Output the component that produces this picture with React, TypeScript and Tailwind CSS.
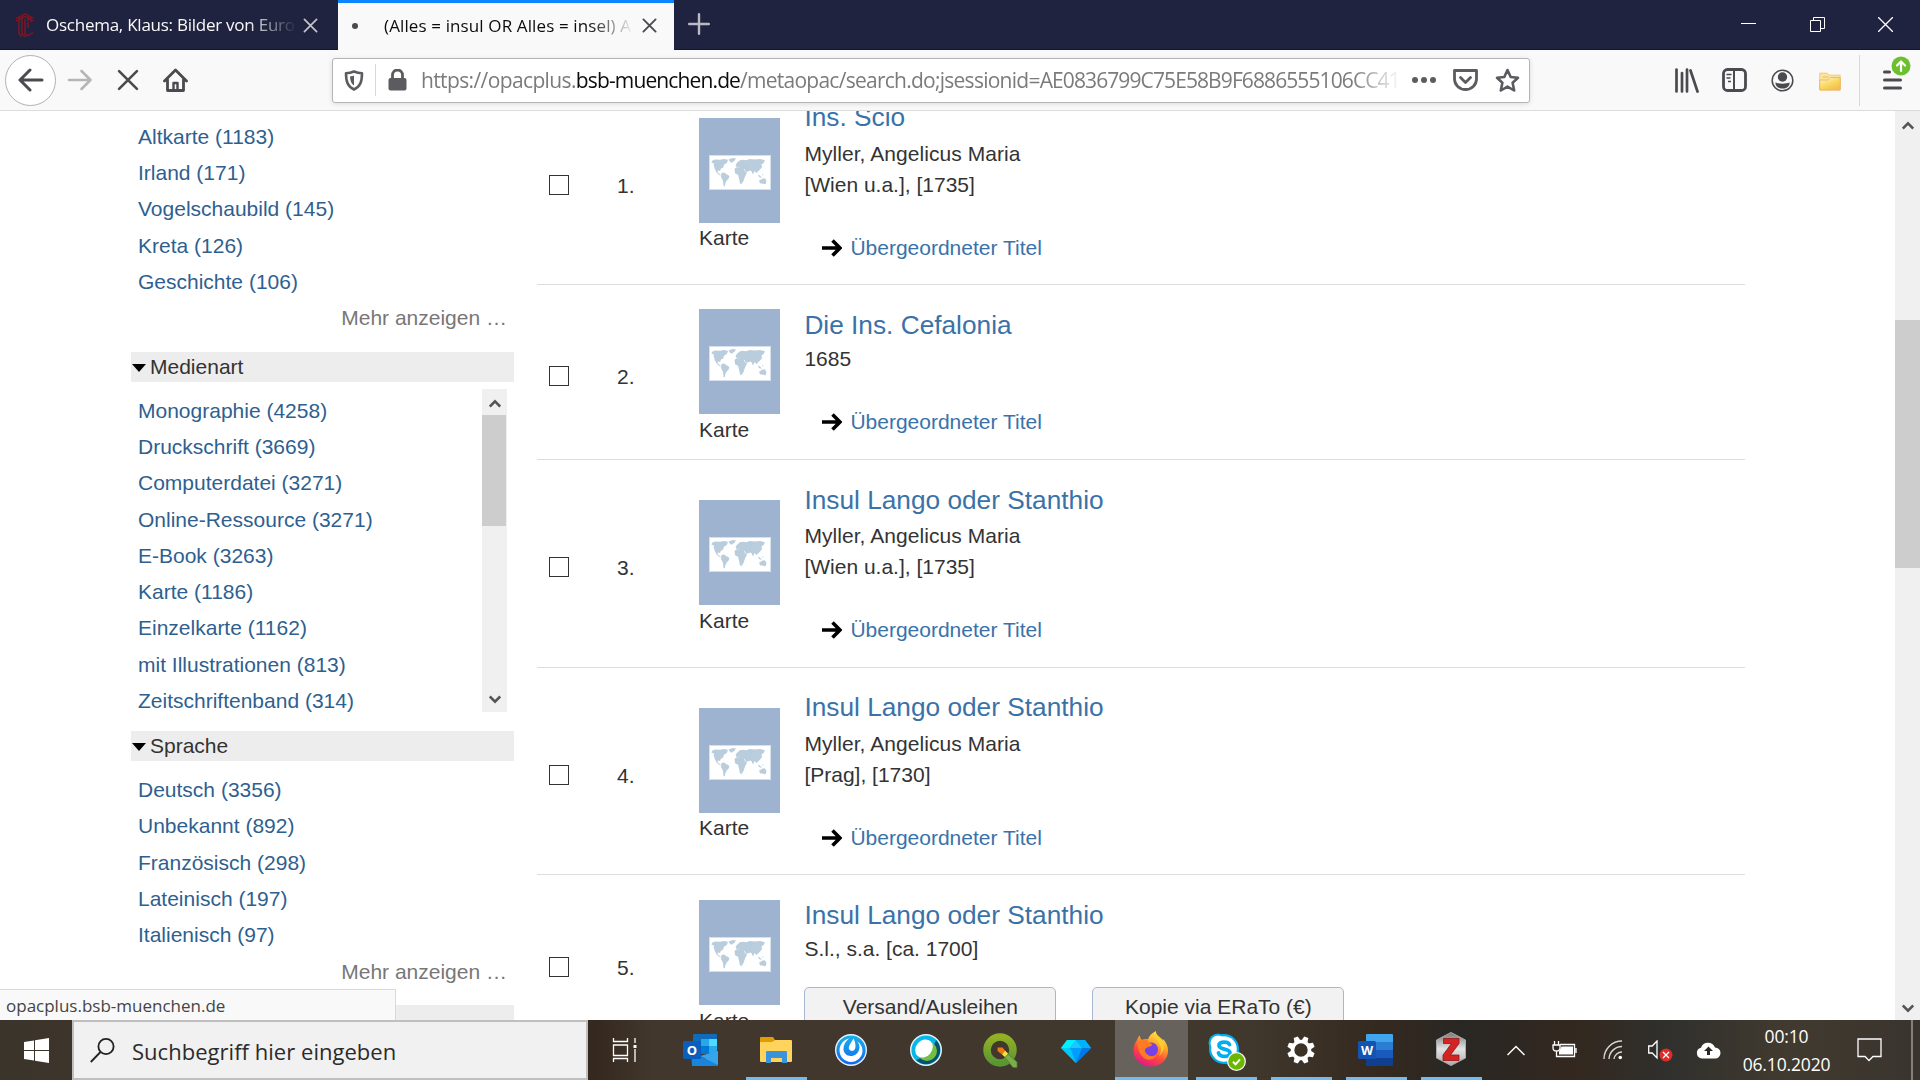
import React from "react";

const UI = "font-['Open_Sans','Noto_Sans',sans-serif]";

type Facet = { label: string; count: number };

const subjects: Facet[] = [
  { label: "Altkarte", count: 1183 },
  { label: "Irland", count: 171 },
  { label: "Vogelschaubild", count: 145 },
  { label: "Kreta", count: 126 },
  { label: "Geschichte", count: 106 },
];

const media: Facet[] = [
  { label: "Monographie", count: 4258 },
  { label: "Druckschrift", count: 3669 },
  { label: "Computerdatei", count: 3271 },
  { label: "Online-Ressource", count: 3271 },
  { label: "E-Book", count: 3263 },
  { label: "Karte", count: 1186 },
  { label: "Einzelkarte", count: 1162 },
  { label: "mit Illustrationen", count: 813 },
  { label: "Zeitschriftenband", count: 314 },
];

const languages: Facet[] = [
  { label: "Deutsch", count: 3356 },
  { label: "Unbekannt", count: 892 },
  { label: "Französisch", count: 298 },
  { label: "Lateinisch", count: 197 },
  { label: "Italienisch", count: 97 },
];

type Result = {
  title: string;
  author?: string;
  imprint: string;
  height: string;
  cover: string;
  caption: string;
  check: string;
  body: string;
  gap: string;
  order?: boolean;
};

const results: Result[] = [
  { title: "Ins. Scio", author: "Myller, Angelicus Maria", imprint: "[Wien u.a.], [1735]", height: "h-[208px]", cover: "pt-[41px]", caption: "leading-[30px]", check: "pt-[98px]", body: "pt-[24px]", gap: "mt-[5px]" },
  { title: "Die Ins. Cefalonia", imprint: "1685", height: "h-[175px]", cover: "pt-[24px]", caption: "leading-[32px]", check: "pt-[81px]", body: "pt-[24px]", gap: "mt-[2px]" },
  { title: "Insul Lango oder Stanthio", author: "Myller, Angelicus Maria", imprint: "[Wien u.a.], [1735]", height: "h-[208px]", cover: "pt-[40px]", caption: "leading-[32px]", check: "pt-[97px]", body: "pt-[24px]", gap: "mt-[4px]" },
  { title: "Insul Lango oder Stanthio", author: "Myller, Angelicus Maria", imprint: "[Prag], [1730]", height: "h-[207px]", cover: "pt-[40px]", caption: "leading-[30px]", check: "pt-[97px]", body: "pt-[23px]", gap: "mt-[5px]" },
  { title: "Insul Lango oder Stanthio", imprint: "S.l., s.a. [ca. 1700]", height: "h-[240px]", cover: "pt-[25px]", caption: "leading-[32px]", check: "pt-[82px]", body: "pt-[24px]", gap: "mt-[2px]", order: true },
];

function Cross({ size, color, width }: { size: number; color: string; width: number }) {
  return (
    <svg width={size} height={size} viewBox="0 0 16 16" className="shrink-0" fill="none" stroke={color} strokeWidth={width} strokeLinecap="round">
      <path d="M1.5 1.5l13 13M14.5 1.5l-13 13" />
    </svg>
  );
}

function TabBar() {
  return (
    <div className="flex h-[50px] shrink-0 border-b border-[#15162c] bg-[#202340]">
      <div className="flex h-[49px] w-[338px] items-center pt-px pl-[15px]">
        <svg width="20" height="25" viewBox="0 0 20 25" fill="none" stroke="#8a1420" strokeWidth="1.3">
          <path d="M1 5.500l9-4.500 9 4.500M1 8l9-4.500L19 8M4 9V4M7 8V3M13 8V3M16 9V4M4 9v12l3 2.500M7 8v13l4 3M10 6v15l3 1.500 5-3M13 9v6" />
        </svg>
        <span className={`${UI} ml-[11px] w-[251px] overflow-hidden whitespace-nowrap text-[17px] tracking-[-0.25px] text-[#f9f9fa] [mask-image:linear-gradient(to_right,black_80%,transparent)]`}>
          Oschema, Klaus: Bilder von Euro
        </span>
        <span className="ml-[6px] flex"><Cross size={15} color="#c4c5cd" width={1.8} /></span>
      </div>
      <div className="z-10 flex h-[50px] w-[336px] items-center border-t-[3px] border-[#0a84ff] bg-[#f9f9fa] pb-[2px] pl-[14px]">
        <span className="h-[6px] w-[6px] rounded-full bg-[#4a4a4f]" />
        <span className={`${UI} ml-[26px] w-[250px] overflow-hidden whitespace-nowrap text-[17px] tracking-[0.12px] text-[#0c0c0d] [mask-image:linear-gradient(to_right,black_82%,transparent)]`}>
          (Alles = insul OR Alles = insel) A
        </span>
        <span className="ml-[8px] flex"><Cross size={15} color="#4a4a4f" width={2} /></span>
      </div>
      <svg width="22" height="22" viewBox="0 0 22 22" className="ml-[14px] mt-[13px]" stroke="#b9bac4" strokeWidth="2.4" strokeLinecap="round">
        <path d="M11 1.2v19.6M1.2 11h19.6" />
      </svg>
      <div className="mt-[17px] ml-auto flex h-[15px] gap-[53px] pr-[27px]">
        <svg width="15" height="15" className="-translate-x-px" stroke="#fff"><path d="M0 6.500h15" /></svg>
        <svg width="15" height="15" stroke="#fff" fill="none"><path d="M.5 3.5h10v11h-10zM3.5 3.5v-3h11v11h-4" /></svg>
        <svg width="15" height="15" stroke="#fff" strokeWidth="1.3"><path d="M0 0l15 15M15 0L0 15" /></svg>
      </div>
    </div>
  );
}

function NavBar() {
  return (
    <div className="flex h-[61px] shrink-0 items-center border-b border-[#dcdcdd] bg-[#f9f9fa]">
      <div className="ml-[5px] flex h-[51px] w-[51px] items-center justify-center rounded-full border border-[#b1b1b3] bg-white">
        <svg width="26" height="24" viewBox="0 0 26 24" fill="none" stroke="#4a4a4f" strokeWidth="3" strokeLinecap="round" strokeLinejoin="round">
          <path d="M24 12H2.5M12 2L2 12l10 10" />
        </svg>
      </div>
      <svg width="26" height="24" viewBox="0 0 26 24" className="ml-[11px]" fill="none" stroke="#b6b6b8" strokeWidth="2.6" strokeLinecap="round" strokeLinejoin="round">
        <path d="M2 12h21.500M14.500 3l9 9-9 9" />
      </svg>
      <span className="ml-[24px] flex"><Cross size={22} color="#4a4a4f" width={1.9} /></span>
      <svg width="25" height="25" viewBox="0 0 25 25" className="ml-[24px]" fill="none" stroke="#4a4a4f" strokeWidth="2.800" strokeLinejoin="round" strokeLinecap="round">
        <path d="M1.500 13L12.500 2l11 11M4.500 11.500v11h16v-11" />
        <path d="M10.500 22v-7h4v7" strokeWidth="2.400" />
      </svg>
      <div className="ml-[144px] flex h-[45px] w-[1198px] shrink-0 items-center rounded-[3px] border border-[#b5b5b7] bg-white shadow-[0_1px_5px_rgba(0,0,0,0.12)]">
        <svg width="20" height="21" viewBox="0 0 20 21" className="ml-[11px]" fill="none" stroke="#5c5c60" strokeWidth="2.600" strokeLinejoin="round">
          <path d="M10 1.500c3 1.300 5 1.700 8 1.800 0 8-1.500 13-8 16.200C3.500 16.300 2 11.300 2 3.300c3-.1 5-.5 8-1.800z" />
          <path d="M10 5.500c-1.500.6-2.500.8-4 1 .2 4.500 1.200 7 4 9z" fill="#5c5c60" stroke="none" />
        </svg>
        <span className="ml-[11px] h-[32px] w-px bg-[#d7d7db]" />
        <svg width="19" height="22" viewBox="0 0 19 22" className="ml-[12px]" fill="none">
          <rect x="0.500" y="9" width="18" height="12.500" rx="2" fill="#5c5c60" />
          <path d="M4.500 10V6a5 5 0 0 1 10 0v4" stroke="#5c5c60" strokeWidth="2.800" />
        </svg>
        <span className={`${UI} ml-[14px] w-[980px] overflow-hidden pt-[2px] text-[21px] whitespace-nowrap text-[#7b7b7d] [mask-image:linear-gradient(to_right,black_95%,transparent)]`}>
          <span className="tracking-[-0.62px]">https://opacplus.</span>
          <span className="tracking-[-0.87px] text-[#0c0c0d]">bsb-muenchen.de</span>
          <span className="tracking-[-0.74px]">/metaopac/search.do;jsessionid=</span>
          <span className="tracking-[-0.9px]">AE0836799C75E58B9F6886555106CC41</span>
        </span>
        <svg width="24" height="6" className="ml-[11px]" fill="#5c5c60"><circle cx="3" cy="3" r="3" /><circle cx="12" cy="3" r="3" /><circle cx="21" cy="3" r="3" /></svg>
        <svg width="25" height="22" viewBox="0 0 25 22" className="ml-[17px]" fill="none" stroke="#5c5c60" strokeWidth="2.800" strokeLinecap="round" strokeLinejoin="round">
          <path d="M1.500 1.500h22V10a11 10.500 0 0 1-22 0z" /><path d="M7.500 8.500l5 5 5-5" />
        </svg>
        <svg width="25" height="25" viewBox="0 0 25 25" className="ml-[17px]" fill="none" stroke="#5c5c60" strokeWidth="2.600" strokeLinejoin="round">
          <path d="M12.500 2l3.200 7 7.300.8-5.400 5 1.600 7.700-6.700-3.900-6.700 3.900 1.600-7.700-5.400-5 7.300-.8z" />
        </svg>
      </div>
      <svg width="24" height="25" viewBox="0 0 24 25" className="ml-[145px]" fill="none" stroke="#4a4a4f" strokeWidth="2.700" strokeLinecap="round">
        <path d="M1.500 1.500v22M7 5v18.500M12 1.500v22M15.500 2.500l7 21" />
      </svg>
      <svg width="25" height="24" viewBox="0 0 25 24" className="ml-[23px]" fill="none" stroke="#4a4a4f">
        <rect x="1.500" y="1.500" width="22" height="21" rx="4" strokeWidth="2.800" />
        <path d="M12 2v20" strokeWidth="2" /><path d="M4.500 6.500h5M4.500 10h4M6 13.500h3" strokeWidth="1.500" />
      </svg>
      <svg width="23" height="23" viewBox="0 0 23 23" className="ml-[24px]" fill="none">
        <circle cx="11.500" cy="11.500" r="10.300" stroke="#4a4a4f" strokeWidth="1.500" />
        <circle cx="11.500" cy="8" r="4.700" fill="#4a4a4f" />
        <path d="M4.500 13.500c3 1.500 11 1.500 14 0 .5 3-2.500 6-7 6s-7.500-3-7-6z" fill="#4a4a4f" />
      </svg>
      <svg width="22" height="19" viewBox="0 0 22 19" className="mt-[2px] ml-[25px]">
        <defs><linearGradient id="nf" x1="0" y1="0" x2=".7" y2="1"><stop offset="0" stopColor="#fff6cf" /><stop offset=".7" stopColor="#f6d24e" /><stop offset="1" stopColor="#f3bb62" /></linearGradient></defs>
        <path d="M.8 18V1.200h7.500l1.500 2h11.400V18z" fill="#fbe6a0" stroke="#f2c777" />
        <path d="M.8 8h8l2.500-2.500h9.900V18H.8z" fill="url(#nf)" stroke="#efb966" />
        <path d="M3.500 5h6" stroke="#edc266" strokeWidth="1.200" />
      </svg>
      <span className="ml-[18px] h-[51px] w-px bg-[#d7d7db]" />
      <div className="relative ml-[23px] h-[20px] w-[19px]">
        <svg width="19" height="20" stroke="#4a4a4f" strokeWidth="3" strokeLinecap="round"><path d="M1.500 2h5M1.500 10h16M1.500 18h16" /></svg>
        <svg width="20" height="20" viewBox="0 0 20 20" className="absolute -top-[14px] left-[8px]">
          <circle cx="10" cy="10" r="9.500" fill="#6cc02f" />
          <path d="M10 15V6M6 9.500l4-4 4 4" fill="none" stroke="#fff" strokeWidth="2.200" strokeLinecap="round" strokeLinejoin="round" />
        </svg>
      </div>
    </div>
  );
}

function FacetList({ items }: { items: Facet[] }) {
  return (
    <ul>
      {items.map((f) => (
        <li key={f.label} className="h-[36.25px] pl-[7px] leading-[36px] text-[#2f5f8f]">
          {f.label} ({f.count})
        </li>
      ))}
    </ul>
  );
}

function FacetHeader({ label }: { label: string }) {
  return (
    <div className="flex h-[30px] items-center bg-[#ededed] text-[#333]">
      <svg width="14" height="8" className="mr-[4px] ml-[1px] mt-px"><path d="M0 0h14L7 8z" fill="#000" /></svg>
      {label}
    </div>
  );
}

function More() {
  return <div className="h-[36px] pr-[7px] text-right leading-[36px] text-[#777]">Mehr anzeigen …</div>;
}

function Arrow({ down = false }: { down?: boolean }) {
  return (
    <svg width="12" height="9" viewBox="0 0 12 9" fill="none" stroke="#555" strokeWidth="2.600">
      <path d={down ? "M.8 1.500L6 6.700l5.200-5.200" : "M.8 7.500L6 2.300l5.200 5.200"} />
    </svg>
  );
}

function Sidebar() {
  return (
    <aside className="ml-[131px] w-[383px] shrink-0 text-[21px]">
      <div className="h-[241px] pt-[7.75px]">
        <FacetList items={subjects} />
        <More />
      </div>
      <FacetHeader label="Medienart" />
      <div className="mt-[7px] mb-[19px] flex h-[323px] justify-between overflow-hidden pr-[7px]">
        <div className="pt-[3.75px]"><FacetList items={media} /></div>
        <div className="flex w-[25px] flex-col items-center justify-between bg-[#f0f0f0] pt-[10px] pb-[8px]">
          <div className="flex w-full flex-col items-center gap-[7px]">
            <Arrow />
            <div className="mr-px h-[111px] w-[24px] bg-[#cdcdcd]" />
          </div>
          <Arrow down />
        </div>
      </div>
      <FacetHeader label="Sprache" />
      <div className="h-[244px] pt-[11px]">
        <FacetList items={languages} />
        <div className="pt-px"><More /></div>
      </div>
      <FacetHeader label="" />
    </aside>
  );
}

function WorldMap() {
  return (
    <svg width="62" height="35" viewBox="0 0 62 36" preserveAspectRatio="none" className="mt-[37px] ml-[10px] block">
      <rect x=".5" y=".5" width="61" height="35" fill="#fff" stroke="#d5e1ec" />
      <g fill="#b9cddd">
        <path d="M3 6l3-1.500 5 .5 4-1 4 1-1 3-3 2-1 3-2 1-1 2.500-2-.5-.5 1.500 2 2 1.500 1-1 .5-3-2.500-2-3.500-1.200-4L4.500 8 2.500 8.500z" />
        <path d="M19.500 4.500l4-1.500 3.500.5-1.500 2.500-3 2-1.500-1z" />
        <path d="M12.500 18.500l2.500-.5 3 2 2.500 1.500-1 3-2 2-1 2-.8 4-1.200-1-.5-5-2-4z" />
        <path d="M25.500 14.500l2-2 4 .2 3 1 1.500 3 2 1.500-2 4-1.500 4.500-2 3-1.500-.5-1-5-1-4-3-1.500z" />
        <path d="M26.500 10.500l1.500-2.500 3-2.500 3-.5 3 .5 4-1.500 5 .5 5-.5 5 1.500-1.500 3-2 1 .5 3-2 2.500-2 2-1.500 1.500-2-2-1.500 3.500-2-4-2 .5-3 1-1.500-3-4-1-2-1.500-1.500.5z" />
        <path d="M49 20l2 1 2 2.500-3-1zM53.500 19l1 1.500-1 .5zM50 26.500l3-2 3-.5 1.500 3-1 3-2.500-.5-3-.5z" />
      </g>
    </svg>
  );
}

function ResultRow({ r, n }: { r: Result; n: number }) {
  return (
    <li className={`flex shrink-0 border-t border-[#ddd] ${r.height}`}>
      <div className={`w-[80px] pl-[12px] ${r.check}`}>
        <div className="h-[20px] w-[20px] border border-[#333] bg-white" />
      </div>
      <div className={`w-[82px] leading-[21px] ${r.check}`}>{n}.</div>
      <div className={`w-[105.400px] ${r.cover}`}>
        <div className="h-[105px] w-[81px] overflow-hidden bg-[#9db3cf]"><WorldMap /></div>
        <div className={r.caption}>Karte</div>
      </div>
      <div className={r.body}>
        <h3 className="text-[26.25px] leading-[32px] text-[#3a72a8]">{r.title}</h3>
        {r.author && <div className={`${r.gap} leading-[31px] tracking-[0.06px]`}>{r.author}</div>}
        <div className={r.author ? "leading-[31px]" : `${r.gap} leading-[31px]`}>{r.imprint}</div>
        {r.order ? (
          <div className="mt-[22px] flex gap-[36px] pt-px">
            {["Versand/Ausleihen", "Kopie via ERaTo (€)"].map((t) => (
              <button key={t} className="h-[40px] w-[252px] rounded-[5px] border border-[#a9b6d3] bg-[#f2f2f2]">{t}</button>
            ))}
          </div>
        ) : (
          <div className="mt-[32px] flex items-center pl-[18px] leading-[31px] text-[#3a72a8]">
            <svg width="20" height="18" viewBox="0 0 20 18" className="mr-[8px]" fill="none" stroke="#000" strokeWidth="3.600"><path d="M0 9h17M10.500 1.500L18 9l-7.500 7.500" /></svg>
            Übergeordneter Titel
          </div>
        )}
      </div>
    </li>
  );
}

function Slot({ children, open, active }: { children: React.ReactNode; open?: boolean; active?: boolean }) {
  return (
    <div className="flex h-[60px] w-[75px] shrink-0 flex-col items-center">
      <div className={active ? "flex h-[57px] w-[73px] items-center justify-center bg-[#67625b] pt-[3px]" : "flex h-[57px] w-[73px] items-center justify-center pt-[3px]"}>
        <div className="-translate-x-px">{children}</div>
      </div>
      {open && <div className={active ? "h-[3px] w-[73px] bg-[#76b9ed]" : "h-[3px] w-[61px] bg-[#76b9ed]"} />}
    </div>
  );
}

function Apps() {
  return (
    <div className="ml-px flex">
      <Slot>
        <svg width="26" height="24" className="-translate-x-px" fill="none" stroke="#fff" strokeWidth="1.300"><path d="M1.500 0v3.500h14V0M1.500 24v-3.500h14V24M1.500 7h14v10.500h-14zM23 0v5M23 11v13" /><path d="M21.500 7h3v3h-3z" fill="#fff" stroke="none" /></svg>
      </Slot>
      <Slot>
        <svg width="36" height="32" viewBox="0 0 36 32">
          <path d="M11 0h22a1 1 0 0 1 1 1v19H10V1z" fill="#0f6cbd" /><path d="M18 5h8v7h-8z" fill="#28a8ea" /><path d="M26 5h8v7h-8z" fill="#50d9ff" /><path d="M18 12h8v8h-8z" fill="#0078d4" /><path d="M26 12h8v7h-8z" fill="#28a8ea" />
          <path d="M8 17l14 8 13-8v14a1 1 0 0 1-1 1H9z" fill="#1a84dc" /><path d="M35 17v14L17 22z" fill="#37a5ee" />
          <rect y="7" width="18" height="18" rx="1.500" fill="#0a5fbd" />
          <text x="9" y="20.500" textAnchor="middle" fontSize="13" fontWeight="700" fill="#fff" fontFamily="Open Sans">O</text>
        </svg>
      </Slot>
      <Slot open>
        <svg width="32" height="26" viewBox="0 0 32 26">
          <path d="M0 1a1 1 0 0 1 1-1h12l2 3-2 3H0z" fill="#e19c00" /><path d="M0 5h12l3-2h16a1 1 0 0 1 1 1v20a1 1 0 0 1-1 1H1a1 1 0 0 1-1-1z" fill="#ffd35c" />
          <path d="M6 15a1 1 0 0 1 1-1h19a1 1 0 0 1 1 1v11h-5v-5H11v5H6z" fill="#3b93d9" />
        </svg>
      </Slot>
      <Slot>
        <svg width="32" height="32" viewBox="0 0 32 32">
          <defs><linearGradient id="mm" x1="0" y1="0" x2="0" y2="1"><stop offset="0" stopColor="#17b5ea" /><stop offset="1" stopColor="#1263f2" /></linearGradient></defs>
          <circle cx="16" cy="16" r="15.300" fill="url(#mm)" stroke="#e8f2fb" strokeWidth="1.400" />
          <path d="M14 4.500C8 6 4.500 11 4.500 16.500 4.500 23 10 28 16 28s11.500-5 11.500-11c0-4-2-7.500-5-9.500 2 3 2.500 5.500 1.500 8.500-1.200 3.800-4.500 6-8 6-4.500 0-8-3.500-7.500-8C8.800 10 11 7 14 4.500z" fill="#fff" /><path d="M18.500 4.500c1.500 3 2.500 6.500 1.800 9.500-.6 2.200-2.400 3.300-4.300 2.800-2.500-.8-2.700-3.500-1.200-6z" fill="#fff" />
        </svg>
      </Slot>
      <Slot>
        <svg width="32" height="32" viewBox="0 0 32 32">
          <circle cx="16" cy="16" r="15.300" fill="#08b7ea" stroke="#e9f4f8" strokeWidth="1.400" /><path d="M26 6a14 14 0 0 1-20 20l5-2 13-13z" fill="#07526e" /><circle cx="17" cy="17" r="10" fill="#72bf44" /><ellipse cx="14" cy="14.500" rx="8" ry="9.800" transform="rotate(40 14 14.500)" fill="#fff" />
        </svg>
      </Slot>
      <Slot>
        <svg width="35" height="35" viewBox="0 0 35 35">
          <defs><linearGradient id="qg" x1="0" y1="0" x2="0" y2="1"><stop offset="0" stopColor="#93b023" /><stop offset="1" stopColor="#589632" /></linearGradient></defs>
          <circle cx="17" cy="17" r="13" fill="none" stroke="url(#qg)" strokeWidth="7.500" /><path d="M14.500 14.500h5l2.500 3-3 4-4.500-3.500z" fill="#ee7913" /><path d="M19 21.500l3-4 3.500 3.500-3 3.500z" fill="#f5e04a" /><path d="M22 24.500l3-3.500 9 8v5.500h-4z" fill="#7cad4a" stroke="#4c7d2d" strokeWidth=".8" />
        </svg>
      </Slot>
      <Slot>
        <svg width="30" height="23" viewBox="0 0 30 23" className="mt-[3px]"><path d="M6 0h18l6 8-15 15L0 8z" fill="#009dff" /><path d="M6 0h9L9 8H0z" fill="#00f0ff" /><path d="M15 0l6 8H9z" fill="#19c9ff" /><path d="M15 0h9l6 8h-9z" fill="#00b2fa" /><path d="M0 8h9l6 15z" fill="#00c8f8" /><path d="M21 8h9L15 23z" fill="#0078e8" /></svg>
      </Slot>
      <Slot open active>
        <svg width="36" height="36" viewBox="0 0 36 36" className="-translate-y-px">
          <defs><linearGradient id="ff" x1=".8" y1="0" x2=".3" y2="1"><stop offset="0" stopColor="#fff44f" /><stop offset=".35" stopColor="#ffa827" /><stop offset=".65" stopColor="#ff4a3d" /><stop offset="1" stopColor="#e31587" /></linearGradient></defs>
          <path d="M4 9c.5-2 1.500-3.500 3-4.500 0 2 .8 3.500 2 4.500 2-1 4-1.300 6-.8 1-3.500 4-6 8-8.200-.2 4 2 5 4.500 7.500 1 .8 1.300 1.500 1.500 2.500l1-2c3 3 5 7 5 11.500C35 29 27.500 35.500 18 35.500S.5 29 .5 20c0-4 1-8 3.500-11z" fill="url(#ff)" />
          <circle cx="18" cy="18.500" r="7" fill="#7542e5" /><path d="M5 11c3-2.500 6-2.500 10-2.500l-.5 3c2 .5 4 .8 5 2-1 2-4 2-5.500 3-1.500 1.200-3 2-1.500 5 2.500 4 7.500 5 11 2-2 6-10 7-14 2-4-4-5-9-4.500-14.500z" fill="#ff7a24" /><path d="M23 2c-3 6 5 9 5 16 0 3-1 5-2 7 6-5 6-12 3-17-2-2-4-3-6-6z" fill="#ffcf32" opacity=".85" />
        </svg>
      </Slot>
      <Slot open>
        <svg width="38" height="38" viewBox="0 0 38 38" className="mt-[3px] translate-x-px">
          <circle cx="10" cy="10" r="9.500" fill="#00aff0" /><circle cx="22" cy="22" r="10" fill="#00aff0" /><circle cx="16" cy="16" r="15" fill="#00aff0" /><circle cx="10" cy="10" r="7.500" fill="#fff" /><circle cx="16" cy="16" r="12.800" fill="#fff" />
          <path d="M21.500 11.500C20 8.500 11 8 11 12.500c0 5 11 2 11 7.500 0 4.500-10 4.500-11.500 0" fill="none" stroke="#00aff0" strokeWidth="3.800" strokeLinecap="round" />
          <circle cx="28.500" cy="28.500" r="8.800" fill="#6bb700" stroke="#f3f3f3" strokeWidth="1.300" /><path d="M25 28.800l2.500 2.500 4.500-5" fill="none" stroke="#fff" strokeWidth="2" />
        </svg>
      </Slot>
      <Slot open>
        <svg width="28" height="28" viewBox="-14 -14 28 28" fill="#fff">
          <circle r="8.500" fill="none" stroke="#fff" strokeWidth="3.600" />
          {[22.5, 67.5, 112.5, 157.5, 202.5, 247.5, 292.5, 337.5].map((a) => (
            <path key={a} d="M-3.200-9l1-4.800h4.400l1 4.800z" transform={`rotate(${a})`} />
          ))}
        </svg>
      </Slot>
      <Slot open>
        <svg width="36" height="32" viewBox="0 0 36 32">
          <path d="M8 1a1 1 0 0 1 1-1h25a1 1 0 0 1 1 1v7H8z" fill="#41a5ee" /><path d="M8 8h27v8H8z" fill="#2b7cd3" /><path d="M8 16h27v8H8z" fill="#185abd" /><path d="M8 24h27v7a1 1 0 0 1-1 1H9a1 1 0 0 1-1-1z" fill="#103f91" />
          <rect y="7" width="18" height="18" rx="1.500" fill="#1553b0" />
          <text x="9" y="20.500" textAnchor="middle" fontSize="12.500" fontWeight="700" fill="#fff" fontFamily="Open Sans">W</text>
        </svg>
      </Slot>
      <Slot open>
        <svg width="30" height="34" viewBox="0 0 30 34" className="-translate-y-px">
          <defs><linearGradient id="zo" x1="0" y1="0" x2="0" y2="1"><stop offset="0" stopColor="#777" /><stop offset=".5" stopColor="#e4e4e4" /><stop offset="1" stopColor="#aaa" /></linearGradient></defs>
          <path d="M15 .5L29.500 8v18L15 33.500.5 26V8z" fill="url(#zo)" stroke="#aaa" />
          <path d="M7.500 6.500h15.500v5L14.500 23H23v5.500H7V23l8.500-11.500h-8z" fill="#d32323" stroke="#991414" strokeWidth=".8" />
        </svg>
      </Slot>
    </div>
  );
}

function Tray() {
  return (
    <div className="flex h-[60px] flex-1 items-center text-white">
      <svg width="18" height="11" className="ml-[18px]" fill="none" stroke="#fff" strokeWidth="1.500"><path d="M.5 10L9 1.500l8.500 8.500" /></svg>
      <svg width="25" height="17" viewBox="0 0 25 17" className="-mt-px ml-[27px]" fill="none" stroke="#fff" strokeWidth="1.300"><path d="M8 3.500h14.500v12H4M24 7v5M2.500 0v4M6.500 0v4M1 4h7v3a3.500 3 0 0 1-7 0zM4.500 10v6" /><path d="M9.500 5.500H21v8H7v-3z" fill="#fff" stroke="none" /></svg>
      <svg width="20" height="20" viewBox="0 0 20 20" className="ml-[26px]" fill="none" stroke="#d9d6d2" strokeWidth="1.400"><path d="M1 19A18 18 0 0 1 19 1M6 19A13 13 0 0 1 19 6.500M11 19a8 8 0 0 1 8-7" /><circle cx="17.300" cy="17.500" r="1.800" fill="#fff" stroke="none" /></svg>
      <svg width="25" height="22" viewBox="0 0 25 22" className="mt-px ml-[25px]" fill="none"><path d="M.7 6h3.500L9 1v17l-4.800-5H.7z" stroke="#fff" strokeWidth="1.300" /><circle cx="18" cy="15" r="6.500" fill="#de2b2b" /><path d="M15 12l6 6M21 12l-6 6" stroke="#fff" strokeWidth="1.300" /></svg>
      <svg width="25" height="17" viewBox="0 0 25 17" className="ml-[23px]"><path d="M6 16.500a5.500 5.500 0 0 1-1-10.800A7.500 7.500 0 0 1 19 5.500a5.500 5.500 0 0 1 0 11z" fill="#fff" /><path d="M12.500 4.500l4.500 4.500h-3v4h-3V9H8z" fill="#2b2825" /></svg>
      <div className={`${UI} ml-[12px] w-[107px] text-center text-[17.500px] leading-[28px] tracking-[-0.15px]`}>
        <div>00:10</div>
        <div>06.10.2020</div>
      </div>
      <svg width="25" height="24" viewBox="0 0 25 24" className="ml-[17px]" fill="none" stroke="#fff" strokeWidth="1.300"><path d="M1 1h23v17.500h-8L12 22.500l-4-4H1z" /></svg>
      <span className="ml-[29px] h-[60px] w-[2px] bg-[#85807a]" />
    </div>
  );
}

export default function App() {
  return (
    <div className="flex h-[1080px] w-[1920px] flex-col overflow-hidden bg-white font-['Liberation_Sans',Arial,sans-serif]">
      <TabBar />
      <NavBar />
      <main className="relative flex h-[909px] shrink-0 overflow-hidden">
        <Sidebar />
        <ul className="-mt-[35px] ml-[23px] flex w-[1208px] shrink-0 flex-col text-[21px] text-[#333]">
          {results.map((r, i) => <ResultRow key={i} r={r} n={i + 1} />)}
        </ul>
        <div className="ml-auto flex w-[25px] flex-col items-center bg-[#f0f0f0] pt-[10px] pb-[7px]">
          <Arrow />
          <div className="mt-[190px] h-[248px] w-full bg-[#cdcdcd]" />
          <span className="mt-auto flex"><Arrow down /></span>
        </div>
        <div className={`${UI} absolute bottom-0 left-0 h-[31px] w-[396px] border-t border-r border-[#d9d9dc] bg-[#f9f9fa] pl-[6px] text-[17px] leading-[31px] text-[#444]`}>
          opacplus.bsb-muenchen.de
        </div>
      </main>
      <footer className="flex h-[60px] shrink-0 bg-[linear-gradient(90deg,#3b342b_0%,#3d352c_4%,#35291f_31%,#42372d_34%,#40372d_65%,#34291f_72%,#292724_76%,#33281f_82%,#30302d_87%,#413a2f_93%,#39342e_100%)]">
        <div className="flex w-[72px] items-center pl-[24px]">
          <svg width="25" height="25" viewBox="0 0 25 25" fill="#fff"><path d="M0 4l10-1.500V12H0zM11 2.300L25 0v12H11zM0 13h10v9.500L0 21zM11 13h14v12l-14-2.300z" /></svg>
        </div>
        <div className="flex w-[516px] items-center border-2 border-[#bfbfbf] bg-[#f1f1f1] pl-[16px]">
          <svg width="25" height="25" viewBox="0 0 25 25" fill="none" stroke="#222" strokeWidth="1.800"><circle cx="16" cy="8.500" r="7.600" /><path d="M10.500 14L.8 24" /></svg>
          <span className={`${UI} ml-[17px] pt-[2px] text-[22px] tracking-[0.03px] whitespace-nowrap text-[#2b2b2b]`}>Suchbegriff hier eingeben</span>
        </div>
        <Apps />
        <Tray />
      </footer>
    </div>
  );
}
